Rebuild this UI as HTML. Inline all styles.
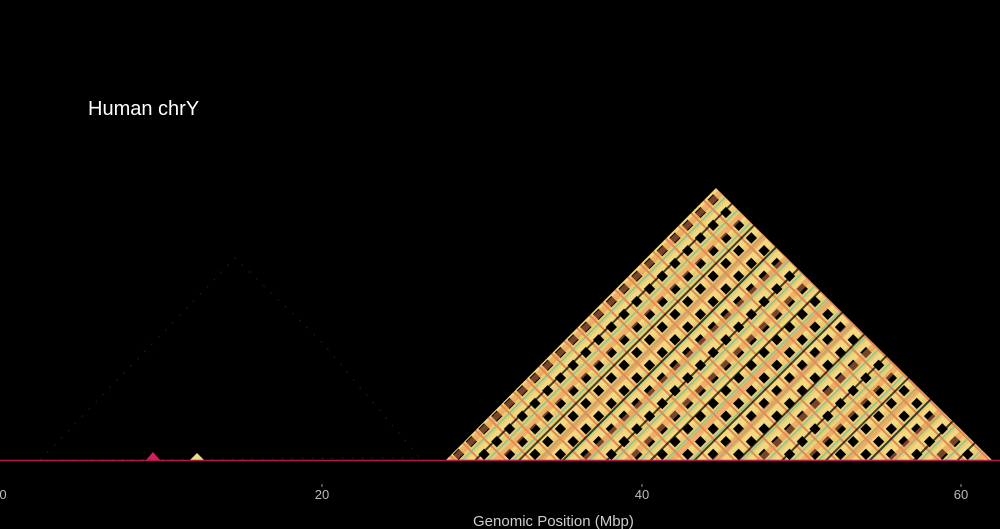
<!DOCTYPE html>
<html><head><style>
html,body{margin:0;padding:0;background:#000;width:1000px;height:529px;overflow:hidden;font-family:"Liberation Sans",sans-serif}
</style></head><body>
<svg width="1000" height="529" xmlns="http://www.w3.org/2000/svg" style="position:absolute;left:0;top:0">
<defs>
<pattern id="p1" width="18" height="18" patternUnits="userSpaceOnUse" patternTransform="rotate(45 716 460)">
<rect width="18" height="18" fill="#ecca70"/>
<rect x="0" y="0" width="9" height="18" fill="#f2d880"/>
<rect x="4" y="4" width="8" height="8" fill="#000"/>
<rect x="14" y="0" width="1.5" height="18" fill="#7fc8a0"/>
<rect x="0" y="14" width="18" height="2" fill="#e28a55"/>
</pattern>
<pattern id="p2" width="31" height="31" patternUnits="userSpaceOnUse" patternTransform="rotate(45 716 460)">
<rect x="0" y="0" width="6" height="31" fill="#e98a52" opacity="0.5"/>
<rect x="18" y="0" width="2" height="31" fill="#000" opacity="0.7"/>
</pattern>
<clipPath id="tri"><polygon points="446,460 716,188 992,460"/></clipPath>
</defs>
<g clip-path="url(#tri)">
<rect x="440" y="180" width="560" height="290" fill="url(#p1)"/>
<rect x="440" y="180" width="560" height="290" fill="url(#p2)"/>
</g>
<polygon points="40,460 235,258 320,340 420,458" fill="none" stroke="#1c1c44" stroke-width="1" stroke-dasharray="2 8"/>
<polygon points="146,460 153,452 160,460" fill="#d0205a"/>
<polygon points="190,460 197,453 204,460" fill="#e6e08a"/>
<line x1="0" y1="460.5" x2="1000" y2="460.5" stroke="#b0184a" stroke-width="1.5"/>
<g fill="#bbb" font-size="13">
<text x="3" y="499" text-anchor="middle">0</text>
<text x="322" y="499" text-anchor="middle">20</text>
<text x="642" y="499" text-anchor="middle">40</text>
<text x="961" y="499" text-anchor="middle">60</text>
</g>
<g stroke="#999"><line x1="322" y1="484" x2="322" y2="487"/><line x1="642" y1="484" x2="642" y2="487"/><line x1="961" y1="484" x2="961" y2="487"/></g>
<text x="473" y="526" fill="#ccc" font-size="15">Genomic Position (Mbp)</text>
<text x="88" y="115" fill="#fff" font-size="20">Human chrY</text>
</svg>
</body></html>
